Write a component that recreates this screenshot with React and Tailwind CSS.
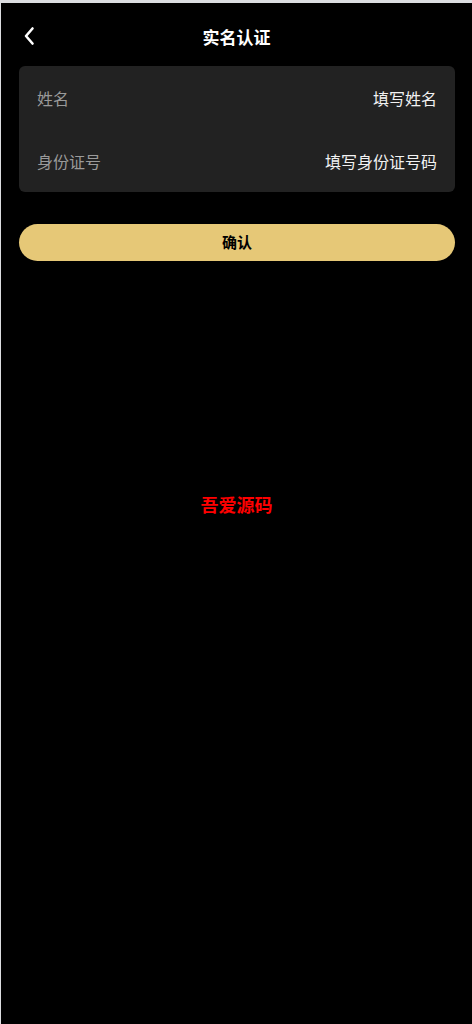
export default function App() {
  const font = { fontFamily: '"Noto Sans CJK SC", "Noto Sans", sans-serif' };
  return (
    <div
      className="h-[1024px] w-full bg-black border-t-[3px] border-l border-[#dcdde0] flex flex-col"
      style={font}
    >
      <div className="relative h-[63px] pt-[3px] flex items-center justify-center">
        <div className="absolute left-[20px] top-[23px] w-[16px] h-[20px] flex items-center justify-center">
          <svg width="12" height="20" viewBox="0 0 12 20" fill="none">
            <polyline
              points="9.5,2.5 3,10 9.5,17.5"
              stroke="white"
              strokeWidth="2.6"
              strokeLinecap="round"
              strokeLinejoin="round"
            />
          </svg>
        </div>
        <div className="text-white text-[17px] font-bold leading-none">实名认证</div>
      </div>
      <div className="ml-[18px] mr-[17px] rounded-[6px] bg-[#222222] flex flex-col">
        <div className="h-[63px] px-[18px] flex items-center justify-between text-[16px]">
          <span className="text-[#9a9a9a]">姓名</span>
          <span className="text-[#f2f2f2]">填写姓名</span>
        </div>
        <div className="h-[63px] px-[18px] flex items-center justify-between text-[16px]">
          <span className="text-[#9a9a9a]">身份证号</span>
          <span className="text-[#f2f2f2]">填写身份证号码</span>
        </div>
      </div>
      <button className="ml-[18px] mr-[17px] mt-[32px] h-[37px] rounded-full bg-[#e6c877] text-black text-[15px] font-bold flex items-center justify-center">
        确认
      </button>
      <div className="mt-[232px] text-center text-[#ff0000] text-[18px] font-bold leading-[22px]">
        吾爱源码
      </div>
    </div>
  );
}
